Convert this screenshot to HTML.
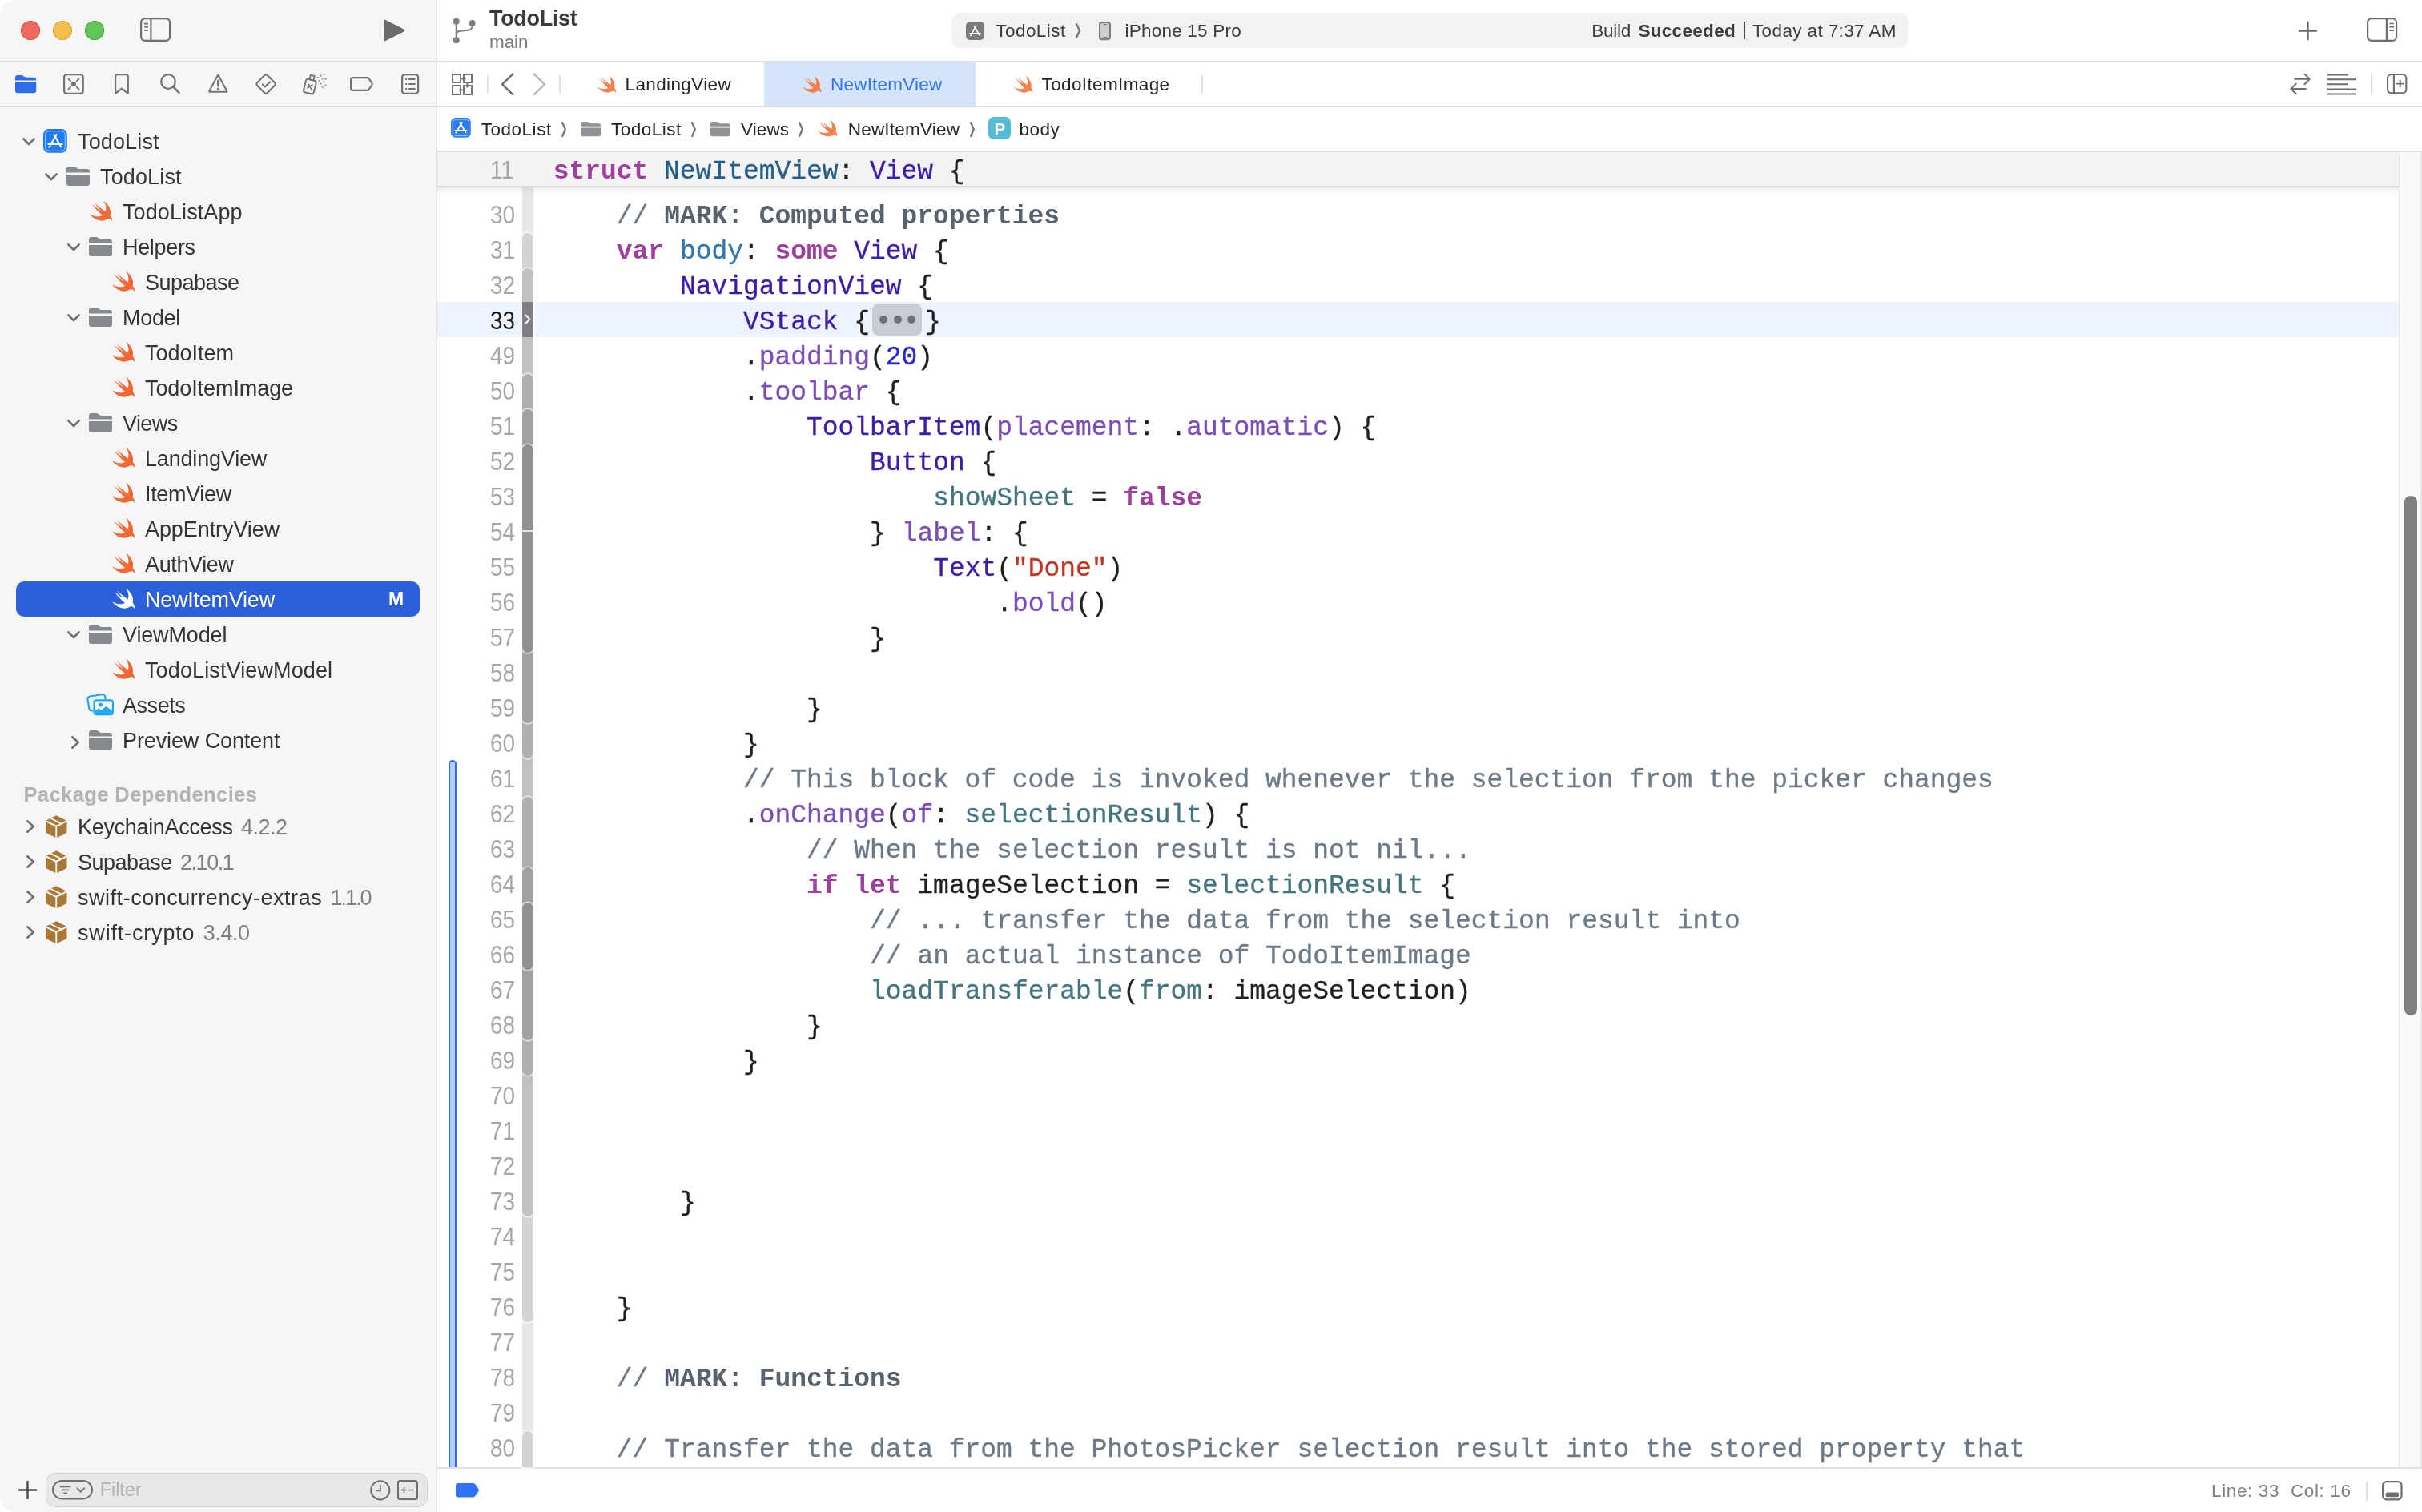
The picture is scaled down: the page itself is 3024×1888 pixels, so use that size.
<!DOCTYPE html>
<html lang="en"><head><meta charset="utf-8"><title>TodoList — NewItemView.swift</title>
<style>html,body{margin:0;padding:0;background:#fff;}body{width:3024px;height:1888px;position:relative;overflow:hidden;font-family:"Liberation Sans",sans-serif;-webkit-font-smoothing:antialiased;}svg{display:block}#win{position:absolute;left:0;top:0;width:3024px;height:1888px;will-change:transform;}</style></head>
<body>
<div id="win">
<div style="position:absolute;left:0px;top:0px;width:3024px;height:1888px;background:#ffffff;"></div>
<div style="position:absolute;left:0px;top:0px;width:544px;height:1888px;background:#f6f6f6;border-radius:20px 0 0 20px;"></div>
<div style="position:absolute;left:544px;top:0px;width:2px;height:1888px;background:linear-gradient(90deg,#ececec,#dadada);"></div>
<div style="position:absolute;left:0px;top:76px;width:544px;height:2px;background:#dadada;"></div>
<div style="position:absolute;left:546px;top:76px;width:2478px;height:2px;background:#dedede;"></div>
<div style="position:absolute;left:0px;top:132px;width:544px;height:2px;background:#dadada;"></div>
<div style="position:absolute;left:546px;top:132px;width:2478px;height:2px;background:#dedede;"></div>
<div style="position:absolute;left:26px;top:26px;width:24px;height:24px;border-radius:50%;background:#ee6a5f;box-shadow:inset 0 0 0 1px #d9574c;"></div>
<div style="position:absolute;left:66px;top:26px;width:24px;height:24px;border-radius:50%;background:#f5be4f;box-shadow:inset 0 0 0 1px #d9a33c;"></div>
<div style="position:absolute;left:106px;top:26px;width:24px;height:24px;border-radius:50%;background:#62c555;box-shadow:inset 0 0 0 1px #4fa941;"></div>
<svg style="position:absolute;left:175px;top:22px;overflow:visible" width="38.2" height="30" viewBox="0 0 38.2 30" ><rect x="1.1" y="1.1" width="36" height="27.8" rx="5" fill="none" stroke="#6e6e6e" stroke-width="2.2"/><path d="M13.4 1.1V28.9" stroke="#6e6e6e" stroke-width="2.2"/><path d="M5 7.6H10M5 11.8H10M5 16H10" stroke="#6e6e6e" stroke-width="1.6"/></svg>
<svg style="position:absolute;left:479px;top:24px;overflow:visible" width="27" height="28" viewBox="0 0 27 28" ><path d="M0 2.4Q0 -.4 2.4 .9L25.4 12.6Q27.6 14 25.4 15.4L2.4 27.1Q0 28.4 0 25.6Z" fill="#6b6b6b"/></svg>
<svg style="position:absolute;left:565px;top:22px;overflow:visible" width="29" height="33" viewBox="0 0 29 33" ><circle cx="4.7" cy="4.7" r="4" fill="#808080"/><circle cx="24.6" cy="7" r="4" fill="#808080"/><circle cx="4.7" cy="28.3" r="4" fill="#808080"/><path d="M4.7 4.7V28.3" stroke="#808080" stroke-width="2" fill="none"/><path d="M24.6 7V10.5Q24.6 15.2 19 15.8L9.5 16.8Q4.7 17.4 4.7 21.5" stroke="#808080" stroke-width="2" fill="none"/></svg>
<div style="position:absolute;left:611.00px;top:5.74px;height:35px;line-height:35px;white-space:pre;font-family:'Liberation Sans',sans-serif;font-size:27px;font-weight:700;color:#3a3a3a;letter-spacing:-0.309px;">TodoList</div>
<div style="position:absolute;left:611.00px;top:38.20px;height:29px;line-height:29px;white-space:pre;font-family:'Liberation Sans',sans-serif;font-size:22.5px;font-weight:400;color:#7a7a7a;letter-spacing:-0.117px;">main</div>
<div style="position:absolute;left:1188px;top:16px;width:1193.5px;height:43.5px;background:#f2f2f2;border-radius:11px;"></div>
<svg style="position:absolute;left:1206px;top:26.5px;overflow:visible" width="23" height="23" viewBox="0 0 30 30" ><rect x="0" y="0" width="30" height="30" rx="7" fill="#7b7b7b"/><rect x="2.6" y="2.6" width="24.8" height="24.8" rx="4.6" fill="none" stroke="rgba(255,255,255,0)" stroke-width="1.1"/><g stroke="#fff" stroke-width="2.1" stroke-linecap="round" fill="none"><path d="M16.6 7.2L9.4 19.6"/><path d="M13.6 7.2L22.4 22.6"/><path d="M6.4 19.2H23.8"/><path d="M8.2 21.8L7.6 22.8"/></g></svg>
<div style="position:absolute;left:1243.30px;top:23.80px;height:29px;line-height:29px;white-space:pre;font-family:'Liberation Sans',sans-serif;font-size:22.5px;font-weight:400;color:#3c3c3c;letter-spacing:0.437px;">TodoList</div>
<svg style="position:absolute;left:1342.7px;top:29.2px;overflow:visible" width="6.4" height="18.6" viewBox="0 0 6.4 18.6" ><path d="M1.2 1.2L5.0 9.3L1.2 17.400000000000002" fill="none" stroke="#787878" stroke-width="2.4" stroke-linecap="round" stroke-linejoin="miter"/></svg>
<svg style="position:absolute;left:1372.4px;top:26.5px;overflow:visible" width="15" height="23.2" viewBox="0 0 15 23.2" ><rect x="1" y="1" width="13" height="21.2" rx="3" fill="#cfcfcf" stroke="#7c7c7c" stroke-width="2"/><path d="M5.4 3.6H9.6M5 19.6H10" stroke="#7c7c7c" stroke-width="1.2"/></svg>
<div style="position:absolute;left:1404.60px;top:23.80px;height:29px;line-height:29px;white-space:pre;font-family:'Liberation Sans',sans-serif;font-size:22.5px;font-weight:400;color:#3c3c3c;letter-spacing:0.207px;">iPhone 15 Pro</div>
<div style="position:absolute;left:1987.20px;top:23.70px;height:29px;line-height:29px;white-space:pre;font-family:'Liberation Sans',sans-serif;font-size:22.5px;font-weight:400;color:#3c3c3c;letter-spacing:-0.266px;">Build</div>
<div style="position:absolute;left:2045.40px;top:23.70px;height:29px;line-height:29px;white-space:pre;font-family:'Liberation Sans',sans-serif;font-size:22.5px;font-weight:700;color:#3c3c3c;letter-spacing:0.321px;">Succeeded</div>
<div style="position:absolute;left:2177px;top:27px;width:2px;height:22px;background:#4a4a4a;"></div>
<div style="position:absolute;left:2188.00px;top:23.70px;height:29px;line-height:29px;white-space:pre;font-family:'Liberation Sans',sans-serif;font-size:22.5px;font-weight:400;color:#3c3c3c;letter-spacing:0.371px;">Today at 7:37 AM</div>
<svg style="position:absolute;left:2870px;top:26.5px;overflow:visible" width="23" height="23" viewBox="0 0 23 23" ><path d="M11.5 1V22M1 11.5H22" stroke="#6b6b6b" stroke-width="2.4" stroke-linecap="round"/></svg>
<svg style="position:absolute;left:2955.2px;top:22px;overflow:visible" width="38.2" height="30" viewBox="0 0 38.2 30" ><rect x="1.1" y="1.1" width="36" height="27.8" rx="5" fill="none" stroke="#6e6e6e" stroke-width="2.2"/><path d="M24.9 1.1V28.9" stroke="#6e6e6e" stroke-width="2.2"/><path d="M28.4 7.5H33.8M28.4 11.8H33.8M28.4 16.1H33.8" stroke="#6e6e6e" stroke-width="1.6"/></svg>
<svg style="position:absolute;left:19px;top:94px;overflow:visible" width="26.2" height="22.2" viewBox="0 0 26.2 22.2" ><path d="M0 3Q0 0 3 0H7.6Q9 0 10.2 .9L11.6 2Q12.6 2.8 14 2.8H23.2Q26.2 2.8 26.2 5.8V6.4H0Z" fill="#2f6beb"/><path d="M0 8.6H26.2V19.2Q26.2 22.2 23.2 22.2H3Q0 22.2 0 19.2Z" fill="#2f6beb"/></svg>
<svg style="position:absolute;left:79.2px;top:91.9px;overflow:visible" width="25.8" height="26" viewBox="0 0 25.8 26" ><rect x="1.1" y="1.1" width="23.6" height="23.8" rx="3.2" fill="none" stroke="#737373" stroke-width="2.2"/><circle cx="12.9" cy="13" r="3.1" fill="#737373"/><g stroke="#737373" stroke-width="1.9" stroke-linecap="round"><path d="M6.4 6.5L9 9.1"/><path d="M19.4 6.5L16.8 9.1"/><path d="M6.4 19.5L9 16.9"/><path d="M19.4 19.5L16.8 16.9"/></g></svg>
<svg style="position:absolute;left:143px;top:91.9px;overflow:visible" width="18" height="26" viewBox="0 0 18 26" ><path d="M1.1 24.6V3.6Q1.1 1.1 3.6 1.1H14.3Q16.8 1.1 16.8 3.6V24.6L8.95 18.6Z" fill="none" stroke="#737373" stroke-width="2.2" stroke-linejoin="round"/></svg>
<svg style="position:absolute;left:198.5px;top:91.2px;overflow:visible" width="26" height="26" viewBox="0 0 26 26" ><circle cx="11" cy="11" r="8.8" fill="none" stroke="#737373" stroke-width="2.3"/><path d="M17.4 17.6L24.6 24.8" stroke="#737373" stroke-width="2.6" stroke-linecap="round"/></svg>
<svg style="position:absolute;left:259.6px;top:91.6px;overflow:visible" width="24.6" height="24" viewBox="0 0 24.6 24" ><path d="M12.3 1.6L23.2 21.4Q23.8 22.8 22.4 22.8H2.2Q.8 22.8 1.4 21.4Z" fill="none" stroke="#737373" stroke-width="2.1" stroke-linejoin="round"/><path d="M12.3 8.6V15.4" stroke="#737373" stroke-width="2.4" stroke-linecap="round"/><circle cx="12.3" cy="19" r="1.4" fill="#737373"/></svg>
<svg style="position:absolute;left:319px;top:91.8px;overflow:visible" width="26.1" height="26.1" viewBox="0 0 26.1 26.1" ><rect x="4.1" y="4.1" width="17.9" height="17.9" rx="2.4" transform="rotate(45 13.05 13.05)" fill="none" stroke="#737373" stroke-width="2.1"/><path d="M8.8 13.6L11.8 16.4L18 10.4" fill="none" stroke="#737373" stroke-width="2.1" stroke-linecap="round" stroke-linejoin="round"/></svg>
<svg style="position:absolute;left:377.5px;top:91.4px;overflow:visible" width="30" height="27.5" viewBox="0 0 30 27.5" ><g transform="rotate(14 9 17)"><rect x="2.4" y="8.6" width="13" height="17" rx="2.6" fill="none" stroke="#737373" stroke-width="2"/><rect x="6.4" y="3" width="5" height="5.6" fill="none" stroke="#737373" stroke-width="1.8"/><path d="M6.4 14.6L11.4 19.6M11.4 14.6L6.4 19.6" stroke="#737373" stroke-width="1.7" stroke-linecap="round"/></g><g fill="#737373" opacity=".75"><rect x="17.6" y="5" width="2" height="2"/><rect x="21.6" y="2.6" width="2" height="2"/><rect x="25.6" y="0.8" width="2" height="2"/><rect x="19.6" y="9" width="2" height="2"/><rect x="23.6" y="6.4" width="2" height="2"/><rect x="27.6" y="6.6" width="2" height="2"/><rect x="21.6" y="12.6" width="2" height="2"/><rect x="25.6" y="10.6" width="2" height="2"/><rect x="23.6" y="16.6" width="2" height="2"/><rect x="27.6" y="14.6" width="2" height="2"/></g></svg>
<svg style="position:absolute;left:437px;top:96px;overflow:visible" width="29.5" height="18" viewBox="0 0 29.5 18" ><path d="M3.6 1.1H21.4Q23 1.1 23.9 2.6L28 9L23.9 15.4Q23 16.9 21.4 16.9H3.6Q1.1 16.9 1.1 14.4V3.6Q1.1 1.1 3.6 1.1Z" fill="none" stroke="#737373" stroke-width="2.2" stroke-linejoin="round"/></svg>
<svg style="position:absolute;left:501px;top:91.9px;overflow:visible" width="22.2" height="26" viewBox="0 0 22.2 26" ><rect x="1.1" y="1.1" width="20" height="23.8" rx="3.2" fill="none" stroke="#737373" stroke-width="2.2"/><g stroke="#737373" stroke-width="2" stroke-linecap="butt"><path d="M5.2 7H7.2M9.2 7H17.6"/><path d="M5.2 13H7.2M9.2 13H17.6"/><path d="M5.2 19H7.2M9.2 19H17.6"/></g></svg>
<svg style="position:absolute;left:564.4px;top:91.7px;overflow:visible" width="26" height="27" viewBox="0 0 26 27" ><g fill="none" stroke="#757575" stroke-width="2"><rect x="1" y="1" width="10" height="10"/><rect x="15" y="1" width="10" height="10"/><rect x="1" y="15" width="10" height="11"/><rect x="15" y="15" width="10" height="11"/><path d="M11 6.6H17.6M9 20.4H15M19.4 11V17.6"/></g></svg>
<div style="position:absolute;left:608px;top:94px;width:2px;height:23px;background:#e3e3e3;"></div>
<svg style="position:absolute;left:625.3px;top:90.8px;overflow:visible" width="17" height="28.6" viewBox="0 0 17 28.6" ><path d="M15.4 1.4L2 14.3L15.4 27.2" fill="none" stroke="#6e6e6e" stroke-width="2.4" stroke-linecap="round" stroke-linejoin="round"/></svg>
<svg style="position:absolute;left:665.2px;top:90.8px;overflow:visible" width="17" height="28.6" viewBox="0 0 17 28.6" ><path d="M1.6 1.4L15 14.3L1.6 27.2" fill="none" stroke="#b9b9b9" stroke-width="2.4" stroke-linecap="round" stroke-linejoin="round"/></svg>
<div style="position:absolute;left:698px;top:94px;width:2px;height:23px;background:#e3e3e3;"></div>
<div style="position:absolute;left:954px;top:78px;width:264px;height:54px;background:#d6e4fb;"></div>
<svg style="position:absolute;left:745.9px;top:94.9px;overflow:visible" width="23.3" height="21" viewBox="2.4 3.4 18.3 16.4" preserveAspectRatio="none"><path d="M13.543 3.41c4.114 2.47 6.545 7.162 5.549 11.131-.024.093-.05.181-.076.272l.002.001c2.062 2.538 1.5 5.258 1.236 4.745-1.072-2.086-3.066-1.568-4.088-1.043a6.803 6.803 0 0 1-.281.158l-.02.012-.002.002c-2.115 1.123-4.957 1.205-7.812-.022a12.568 12.568 0 0 1-5.64-4.838c.649.48 1.35.902 2.097 1.252 3.019 1.414 6.051 1.311 8.197-.002C9.651 12.73 7.101 9.67 5.146 7.191a10.628 10.628 0 0 1-1.005-1.384c2.34 2.142 6.038 4.83 7.365 5.576C8.69 8.408 6.208 4.743 6.324 4.86c4.436 4.47 8.528 6.996 8.528 6.996.154.085.27.154.36.213.085-.215.16-.437.224-.668.708-2.588-.09-5.548-1.893-7.992z" fill="#f0814f"/></svg>
<div style="position:absolute;left:780.60px;top:91.40px;height:29px;line-height:29px;white-space:pre;font-family:'Liberation Sans',sans-serif;font-size:22.5px;font-weight:400;color:#262626;letter-spacing:0.369px;">LandingView</div>
<svg style="position:absolute;left:1001.5px;top:94.9px;overflow:visible" width="23.7" height="21" viewBox="2.4 3.4 18.3 16.4" preserveAspectRatio="none"><path d="M13.543 3.41c4.114 2.47 6.545 7.162 5.549 11.131-.024.093-.05.181-.076.272l.002.001c2.062 2.538 1.5 5.258 1.236 4.745-1.072-2.086-3.066-1.568-4.088-1.043a6.803 6.803 0 0 1-.281.158l-.02.012-.002.002c-2.115 1.123-4.957 1.205-7.812-.022a12.568 12.568 0 0 1-5.64-4.838c.649.48 1.35.902 2.097 1.252 3.019 1.414 6.051 1.311 8.197-.002C9.651 12.73 7.101 9.67 5.146 7.191a10.628 10.628 0 0 1-1.005-1.384c2.34 2.142 6.038 4.83 7.365 5.576C8.69 8.408 6.208 4.743 6.324 4.86c4.436 4.47 8.528 6.996 8.528 6.996.154.085.27.154.36.213.085-.215.16-.437.224-.668.708-2.588-.09-5.548-1.893-7.992z" fill="#f0814f"/></svg>
<div style="position:absolute;left:1037.00px;top:91.40px;height:29px;line-height:29px;white-space:pre;font-family:'Liberation Sans',sans-serif;font-size:22.5px;font-weight:400;color:#2f76f5;letter-spacing:0.215px;">NewItemView</div>
<svg style="position:absolute;left:1265.5px;top:94.9px;overflow:visible" width="23.5" height="21" viewBox="2.4 3.4 18.3 16.4" preserveAspectRatio="none"><path d="M13.543 3.41c4.114 2.47 6.545 7.162 5.549 11.131-.024.093-.05.181-.076.272l.002.001c2.062 2.538 1.5 5.258 1.236 4.745-1.072-2.086-3.066-1.568-4.088-1.043a6.803 6.803 0 0 1-.281.158l-.02.012-.002.002c-2.115 1.123-4.957 1.205-7.812-.022a12.568 12.568 0 0 1-5.64-4.838c.649.48 1.35.902 2.097 1.252 3.019 1.414 6.051 1.311 8.197-.002C9.651 12.73 7.101 9.67 5.146 7.191a10.628 10.628 0 0 1-1.005-1.384c2.34 2.142 6.038 4.83 7.365 5.576C8.69 8.408 6.208 4.743 6.324 4.86c4.436 4.47 8.528 6.996 8.528 6.996.154.085.27.154.36.213.085-.215.16-.437.224-.668.708-2.588-.09-5.548-1.893-7.992z" fill="#f0814f"/></svg>
<div style="position:absolute;left:1300.60px;top:91.40px;height:29px;line-height:29px;white-space:pre;font-family:'Liberation Sans',sans-serif;font-size:22.5px;font-weight:400;color:#262626;letter-spacing:0.363px;">TodoItemImage</div>
<div style="position:absolute;left:1500px;top:94px;width:2px;height:23px;background:#e3e3e3;"></div>
<svg style="position:absolute;left:2859px;top:91px;overflow:visible" width="27" height="28" viewBox="0 0 27 28" ><g fill="none" stroke="#6e6e6e" stroke-width="2" stroke-linecap="round" stroke-linejoin="round"><path d="M6.4 7.8H24.6M18.4 1.6L24.8 7.8L18.4 14.2"/><path d="M19.8 19.9H1.6M7.8 13.6L1.4 19.9L7.8 26.2"/></g></svg>
<svg style="position:absolute;left:2906px;top:91.5px;overflow:visible" width="36" height="27" viewBox="0 0 36 27" ><path d="M0 1.4H26M0 7.3H36M0 13.3H26M0 19.4H36M0 25.5H36" stroke="#6e6e6e" stroke-width="2"/></svg>
<div style="position:absolute;left:2960px;top:93px;width:2px;height:24px;background:#e3e3e3;"></div>
<svg style="position:absolute;left:2980.2px;top:92.2px;overflow:visible" width="25.4" height="25.4" viewBox="0 0 25.4 25.4" ><g fill="none" stroke="#6e6e6e" stroke-width="2.1"><rect x="1.05" y="1.05" width="23.3" height="23.3" rx="4.8"/><path d="M8.9 1V24.4"/><path d="M12 12.6H21.4M16.7 7.9V17.3" stroke-width="1.9"/></g></svg>
<div style="position:absolute;left:546px;top:188px;width:2478px;height:2px;background:#dedede;"></div>
<svg style="position:absolute;left:563.2px;top:147.3px;overflow:visible" width="24.8" height="24.8" viewBox="0 0 30 30" ><rect x="0" y="0" width="30" height="30" rx="7" fill="#2a7df6"/><rect x="2.6" y="2.6" width="24.8" height="24.8" rx="4.6" fill="none" stroke="rgba(255,255,255,.6)" stroke-width="1.1"/><g stroke="#fff" stroke-width="2.1" stroke-linecap="round" fill="none"><path d="M16.6 7.2L9.4 19.6"/><path d="M13.6 7.2L22.4 22.6"/><path d="M6.4 19.2H23.8"/><path d="M8.2 21.8L7.6 22.8"/></g></svg>
<div style="position:absolute;left:600.70px;top:146.60px;height:29px;line-height:29px;white-space:pre;font-family:'Liberation Sans',sans-serif;font-size:22.5px;font-weight:400;color:#262626;letter-spacing:0.524px;">TodoList</div>
<svg style="position:absolute;left:700.7px;top:151.6px;overflow:visible" width="6.2" height="19.2" viewBox="0 0 6.2 19.2" ><path d="M1.2 1.2L4.800000000000001 9.6L1.2 18.0" fill="none" stroke="#787878" stroke-width="2.4" stroke-linecap="round" stroke-linejoin="miter"/></svg>
<svg style="position:absolute;left:725.4px;top:151.7px;overflow:visible" width="25" height="18.2" viewBox="0 0 29 24" preserveAspectRatio="none"><path d="M0 3.2Q0 0 3.2 0H9.2Q10.6 0 11.8 1L13.2 2.2Q14.2 3 15.6 3H25.8Q29 3 29 6.2V7.6H0Z" fill="#8e9297"/><path d="M0 10H29V20.8Q29 24 25.8 24H3.2Q0 24 0 20.8Z" fill="#8e9297"/></svg>
<div style="position:absolute;left:763.00px;top:146.60px;height:29px;line-height:29px;white-space:pre;font-family:'Liberation Sans',sans-serif;font-size:22.5px;font-weight:400;color:#262626;letter-spacing:0.499px;">TodoList</div>
<svg style="position:absolute;left:862.7px;top:151.6px;overflow:visible" width="6.2" height="19.2" viewBox="0 0 6.2 19.2" ><path d="M1.2 1.2L4.800000000000001 9.6L1.2 18.0" fill="none" stroke="#787878" stroke-width="2.4" stroke-linecap="round" stroke-linejoin="miter"/></svg>
<svg style="position:absolute;left:887.3px;top:151.7px;overflow:visible" width="25" height="18.2" viewBox="0 0 29 24" preserveAspectRatio="none"><path d="M0 3.2Q0 0 3.2 0H9.2Q10.6 0 11.8 1L13.2 2.2Q14.2 3 15.6 3H25.8Q29 3 29 6.2V7.6H0Z" fill="#8e9297"/><path d="M0 10H29V20.8Q29 24 25.8 24H3.2Q0 24 0 20.8Z" fill="#8e9297"/></svg>
<div style="position:absolute;left:925.10px;top:146.60px;height:29px;line-height:29px;white-space:pre;font-family:'Liberation Sans',sans-serif;font-size:22.5px;font-weight:400;color:#262626;letter-spacing:0.058px;">Views</div>
<svg style="position:absolute;left:996.7px;top:151.6px;overflow:visible" width="6.2" height="19.2" viewBox="0 0 6.2 19.2" ><path d="M1.2 1.2L4.800000000000001 9.6L1.2 18.0" fill="none" stroke="#787878" stroke-width="2.4" stroke-linecap="round" stroke-linejoin="miter"/></svg>
<svg style="position:absolute;left:1021.1px;top:150.3px;overflow:visible" width="24.8" height="20.6" viewBox="2.4 3.4 18.3 16.4" preserveAspectRatio="none"><path d="M13.543 3.41c4.114 2.47 6.545 7.162 5.549 11.131-.024.093-.05.181-.076.272l.002.001c2.062 2.538 1.5 5.258 1.236 4.745-1.072-2.086-3.066-1.568-4.088-1.043a6.803 6.803 0 0 1-.281.158l-.02.012-.002.002c-2.115 1.123-4.957 1.205-7.812-.022a12.568 12.568 0 0 1-5.64-4.838c.649.48 1.35.902 2.097 1.252 3.019 1.414 6.051 1.311 8.197-.002C9.651 12.73 7.101 9.67 5.146 7.191a10.628 10.628 0 0 1-1.005-1.384c2.34 2.142 6.038 4.83 7.365 5.576C8.69 8.408 6.208 4.743 6.324 4.86c4.436 4.47 8.528 6.996 8.528 6.996.154.085.27.154.36.213.085-.215.16-.437.224-.668.708-2.588-.09-5.548-1.893-7.992z" fill="#f0814f"/></svg>
<div style="position:absolute;left:1058.70px;top:146.60px;height:29px;line-height:29px;white-space:pre;font-family:'Liberation Sans',sans-serif;font-size:22.5px;font-weight:400;color:#262626;letter-spacing:0.215px;">NewItemView</div>
<svg style="position:absolute;left:1211px;top:151.6px;overflow:visible" width="6.2" height="19.2" viewBox="0 0 6.2 19.2" ><path d="M1.2 1.2L4.800000000000001 9.6L1.2 18.0" fill="none" stroke="#787878" stroke-width="2.4" stroke-linecap="round" stroke-linejoin="miter"/></svg>
<div style="position:absolute;left:1234.1px;top:145.8px;width:28px;height:28px;border-radius:6.5px;background:#56bcd6;"></div>
<div style="position:absolute;left:1241.50px;top:146.90px;height:27px;line-height:27px;white-space:pre;font-family:'Liberation Sans',sans-serif;font-size:20.5px;font-weight:700;color:#ffffff;letter-spacing:0.000px;">P</div>
<div style="position:absolute;left:1272.50px;top:146.60px;height:29px;line-height:29px;white-space:pre;font-family:'Liberation Sans',sans-serif;font-size:22.5px;font-weight:400;color:#262626;letter-spacing:0.502px;">body</div>
<div style="position:absolute;left:546px;top:1832px;width:2478px;height:2px;background:#e2e2e2;"></div>
<div style="position:absolute;left:546px;top:1834px;width:2478px;height:54px;background:#ffffff;"></div>
<svg style="position:absolute;left:569px;top:1852.3px;overflow:visible" width="29" height="17.4" viewBox="0 0 29 17.4" ><path d="M3 0H21.6Q23.4 0 24.6 1.6L28.4 7.2Q29.2 8.7 28.4 10.2L24.6 15.8Q23.4 17.4 21.6 17.4H3Q0 17.4 0 14.4V3Q0 0 3 0Z" fill="#2f72f6"/></svg>
<div style="position:absolute;left:2761.00px;top:1847.10px;height:29px;line-height:29px;white-space:pre;font-family:'Liberation Sans',sans-serif;font-size:22.5px;font-weight:400;color:#7f7f7f;letter-spacing:0.632px;">Line: 33  Col: 16</div>
<div style="position:absolute;left:2954px;top:1850px;width:2px;height:24px;background:#e3e3e3;"></div>
<svg style="position:absolute;left:2973.6px;top:1849.4px;overflow:visible" width="25.6" height="24.4" viewBox="0 0 25.6 24.4" ><rect x="1.1" y="1.1" width="23.4" height="22.2" rx="4.6" fill="none" stroke="#6e6e6e" stroke-width="2.2"/><rect x="4.6" y="14.6" width="16.4" height="5.6" rx="1.6" fill="#6e6e6e"/></svg>
<svg style="position:absolute;left:22.5px;top:1849px;overflow:visible" width="23" height="23" viewBox="0 0 23 23" ><path d="M11.5 1V22M1 11.5H22" stroke="#4a4a4a" stroke-width="2.4" stroke-linecap="round"/></svg>
<div style="position:absolute;left:56.5px;top:1838.5px;width:475px;height:41.5px;border-radius:12px;background:#e8e8e8;border:1px solid #d2d2d2;"></div>
<svg style="position:absolute;left:65px;top:1848px;overflow:visible" width="51" height="24.4" viewBox="0 0 51 24.4" ><rect x="1" y="1" width="49" height="22.4" rx="11.2" fill="none" stroke="#707070" stroke-width="2"/><path d="M10.6 8.4H22.6M12.8 12.4H20.4M15 16.4H18.2" stroke="#707070" stroke-width="1.8" stroke-linecap="round"/><path d="M31.4 10.4L35.8 14.6L40.2 10.4" fill="none" stroke="#707070" stroke-width="2" stroke-linecap="round" stroke-linejoin="round"/></svg>
<div style="position:absolute;left:124.70px;top:1844.96px;height:31px;line-height:31px;white-space:pre;font-family:'Liberation Sans',sans-serif;font-size:23.5px;font-weight:400;color:#b4b4b4;letter-spacing:-0.037px;">Filter</div>
<svg style="position:absolute;left:462px;top:1847.5px;overflow:visible" width="25.6" height="25.6" viewBox="0 0 25.6 25.6" ><circle cx="12.8" cy="12.8" r="11.6" fill="none" stroke="#6e6e6e" stroke-width="2"/><path d="M12.8 6V13.4H7.6" fill="none" stroke="#6e6e6e" stroke-width="1.8"/></svg>
<svg style="position:absolute;left:496px;top:1848px;overflow:visible" width="26" height="25" viewBox="0 0 26 25" ><rect x="1" y="1" width="24" height="23" rx="2.6" fill="none" stroke="#6e6e6e" stroke-width="2"/><path d="M5 12.5H12M8.5 9V16M14.6 12.5H21" stroke="#6e6e6e" stroke-width="1.7"/></svg>
<svg style="position:absolute;left:28px;top:172px;overflow:visible" width="16" height="9.5" viewBox="0 0 16 9.5" ><path d="M1.3 1.3L8.0 8.0L14.7 1.3" fill="none" stroke="#6f6f6f" stroke-width="2.6" stroke-linecap="round" stroke-linejoin="round"/></svg>
<svg style="position:absolute;left:54.2px;top:161px;overflow:visible" width="29.8" height="29.8" viewBox="0 0 30 30" ><rect x="0" y="0" width="30" height="30" rx="7" fill="#1d7bf5"/><rect x="2.6" y="2.6" width="24.8" height="24.8" rx="4.6" fill="none" stroke="rgba(255,255,255,.55)" stroke-width="1.1"/><g stroke="#fff" stroke-width="2.1" stroke-linecap="round" fill="none"><path d="M16.6 7.2L9.4 19.6"/><path d="M13.6 7.2L22.4 22.6"/><path d="M6.4 19.2H23.8"/><path d="M8.2 21.8L7.6 22.8"/></g></svg>
<div style="position:absolute;left:97.00px;top:159.74px;height:35px;line-height:35px;white-space:pre;font-family:'Liberation Sans',sans-serif;font-size:27px;font-weight:400;color:#353535;letter-spacing:0.142px;">TodoList</div>
<svg style="position:absolute;left:83px;top:208px;overflow:visible" width="29" height="24" viewBox="0 0 29 24" preserveAspectRatio="none"><path d="M0 3.2Q0 0 3.2 0H9.2Q10.6 0 11.8 1L13.2 2.2Q14.2 3 15.6 3H25.8Q29 3 29 6.2V7.6H0Z" fill="#868a8e"/><path d="M0 10H29V20.8Q29 24 25.8 24H3.2Q0 24 0 20.8Z" fill="#868a8e"/></svg>
<svg style="position:absolute;left:56px;top:216px;overflow:visible" width="16" height="9.5" viewBox="0 0 16 9.5" ><path d="M1.3 1.3L8.0 8.0L14.7 1.3" fill="none" stroke="#6f6f6f" stroke-width="2.6" stroke-linecap="round" stroke-linejoin="round"/></svg>
<div style="position:absolute;left:125.00px;top:203.74px;height:35px;line-height:35px;white-space:pre;font-family:'Liberation Sans',sans-serif;font-size:27px;font-weight:400;color:#353535;letter-spacing:0.142px;">TodoList</div>
<svg style="position:absolute;left:111.5px;top:251px;overflow:visible" width="28.2" height="25" viewBox="2.4 3.4 18.3 16.4" preserveAspectRatio="none"><path d="M13.543 3.41c4.114 2.47 6.545 7.162 5.549 11.131-.024.093-.05.181-.076.272l.002.001c2.062 2.538 1.5 5.258 1.236 4.745-1.072-2.086-3.066-1.568-4.088-1.043a6.803 6.803 0 0 1-.281.158l-.02.012-.002.002c-2.115 1.123-4.957 1.205-7.812-.022a12.568 12.568 0 0 1-5.64-4.838c.649.48 1.35.902 2.097 1.252 3.019 1.414 6.051 1.311 8.197-.002C9.651 12.73 7.101 9.67 5.146 7.191a10.628 10.628 0 0 1-1.005-1.384c2.34 2.142 6.038 4.83 7.365 5.576C8.69 8.408 6.208 4.743 6.324 4.86c4.436 4.47 8.528 6.996 8.528 6.996.154.085.27.154.36.213.085-.215.16-.437.224-.668.708-2.588-.09-5.548-1.893-7.992z" fill="#f06a35"/></svg>
<div style="position:absolute;left:153.00px;top:247.74px;height:35px;line-height:35px;white-space:pre;font-family:'Liberation Sans',sans-serif;font-size:27px;font-weight:400;color:#353535;letter-spacing:0.099px;">TodoListApp</div>
<svg style="position:absolute;left:111px;top:296px;overflow:visible" width="29" height="24" viewBox="0 0 29 24" preserveAspectRatio="none"><path d="M0 3.2Q0 0 3.2 0H9.2Q10.6 0 11.8 1L13.2 2.2Q14.2 3 15.6 3H25.8Q29 3 29 6.2V7.6H0Z" fill="#868a8e"/><path d="M0 10H29V20.8Q29 24 25.8 24H3.2Q0 24 0 20.8Z" fill="#868a8e"/></svg>
<svg style="position:absolute;left:84px;top:304px;overflow:visible" width="16" height="9.5" viewBox="0 0 16 9.5" ><path d="M1.3 1.3L8.0 8.0L14.7 1.3" fill="none" stroke="#6f6f6f" stroke-width="2.6" stroke-linecap="round" stroke-linejoin="round"/></svg>
<div style="position:absolute;left:153.00px;top:291.74px;height:35px;line-height:35px;white-space:pre;font-family:'Liberation Sans',sans-serif;font-size:27px;font-weight:400;color:#353535;letter-spacing:-0.320px;">Helpers</div>
<svg style="position:absolute;left:139.5px;top:339px;overflow:visible" width="28.2" height="25" viewBox="2.4 3.4 18.3 16.4" preserveAspectRatio="none"><path d="M13.543 3.41c4.114 2.47 6.545 7.162 5.549 11.131-.024.093-.05.181-.076.272l.002.001c2.062 2.538 1.5 5.258 1.236 4.745-1.072-2.086-3.066-1.568-4.088-1.043a6.803 6.803 0 0 1-.281.158l-.02.012-.002.002c-2.115 1.123-4.957 1.205-7.812-.022a12.568 12.568 0 0 1-5.64-4.838c.649.48 1.35.902 2.097 1.252 3.019 1.414 6.051 1.311 8.197-.002C9.651 12.73 7.101 9.67 5.146 7.191a10.628 10.628 0 0 1-1.005-1.384c2.34 2.142 6.038 4.83 7.365 5.576C8.69 8.408 6.208 4.743 6.324 4.86c4.436 4.47 8.528 6.996 8.528 6.996.154.085.27.154.36.213.085-.215.16-.437.224-.668.708-2.588-.09-5.548-1.893-7.992z" fill="#f06a35"/></svg>
<div style="position:absolute;left:181.00px;top:335.74px;height:35px;line-height:35px;white-space:pre;font-family:'Liberation Sans',sans-serif;font-size:27px;font-weight:400;color:#353535;letter-spacing:-0.513px;">Supabase</div>
<svg style="position:absolute;left:111px;top:384px;overflow:visible" width="29" height="24" viewBox="0 0 29 24" preserveAspectRatio="none"><path d="M0 3.2Q0 0 3.2 0H9.2Q10.6 0 11.8 1L13.2 2.2Q14.2 3 15.6 3H25.8Q29 3 29 6.2V7.6H0Z" fill="#868a8e"/><path d="M0 10H29V20.8Q29 24 25.8 24H3.2Q0 24 0 20.8Z" fill="#868a8e"/></svg>
<svg style="position:absolute;left:84px;top:392px;overflow:visible" width="16" height="9.5" viewBox="0 0 16 9.5" ><path d="M1.3 1.3L8.0 8.0L14.7 1.3" fill="none" stroke="#6f6f6f" stroke-width="2.6" stroke-linecap="round" stroke-linejoin="round"/></svg>
<div style="position:absolute;left:153.00px;top:379.74px;height:35px;line-height:35px;white-space:pre;font-family:'Liberation Sans',sans-serif;font-size:27px;font-weight:400;color:#353535;letter-spacing:-0.308px;">Model</div>
<svg style="position:absolute;left:139.5px;top:427px;overflow:visible" width="28.2" height="25" viewBox="2.4 3.4 18.3 16.4" preserveAspectRatio="none"><path d="M13.543 3.41c4.114 2.47 6.545 7.162 5.549 11.131-.024.093-.05.181-.076.272l.002.001c2.062 2.538 1.5 5.258 1.236 4.745-1.072-2.086-3.066-1.568-4.088-1.043a6.803 6.803 0 0 1-.281.158l-.02.012-.002.002c-2.115 1.123-4.957 1.205-7.812-.022a12.568 12.568 0 0 1-5.64-4.838c.649.48 1.35.902 2.097 1.252 3.019 1.414 6.051 1.311 8.197-.002C9.651 12.73 7.101 9.67 5.146 7.191a10.628 10.628 0 0 1-1.005-1.384c2.34 2.142 6.038 4.83 7.365 5.576C8.69 8.408 6.208 4.743 6.324 4.86c4.436 4.47 8.528 6.996 8.528 6.996.154.085.27.154.36.213.085-.215.16-.437.224-.668.708-2.588-.09-5.548-1.893-7.992z" fill="#f06a35"/></svg>
<div style="position:absolute;left:181.00px;top:423.74px;height:35px;line-height:35px;white-space:pre;font-family:'Liberation Sans',sans-serif;font-size:27px;font-weight:400;color:#353535;letter-spacing:0.005px;">TodoItem</div>
<svg style="position:absolute;left:139.5px;top:471px;overflow:visible" width="28.2" height="25" viewBox="2.4 3.4 18.3 16.4" preserveAspectRatio="none"><path d="M13.543 3.41c4.114 2.47 6.545 7.162 5.549 11.131-.024.093-.05.181-.076.272l.002.001c2.062 2.538 1.5 5.258 1.236 4.745-1.072-2.086-3.066-1.568-4.088-1.043a6.803 6.803 0 0 1-.281.158l-.02.012-.002.002c-2.115 1.123-4.957 1.205-7.812-.022a12.568 12.568 0 0 1-5.64-4.838c.649.48 1.35.902 2.097 1.252 3.019 1.414 6.051 1.311 8.197-.002C9.651 12.73 7.101 9.67 5.146 7.191a10.628 10.628 0 0 1-1.005-1.384c2.34 2.142 6.038 4.83 7.365 5.576C8.69 8.408 6.208 4.743 6.324 4.86c4.436 4.47 8.528 6.996 8.528 6.996.154.085.27.154.36.213.085-.215.16-.437.224-.668.708-2.588-.09-5.548-1.893-7.992z" fill="#f06a35"/></svg>
<div style="position:absolute;left:181.00px;top:467.74px;height:35px;line-height:35px;white-space:pre;font-family:'Liberation Sans',sans-serif;font-size:27px;font-weight:400;color:#353535;letter-spacing:-0.085px;">TodoItemImage</div>
<svg style="position:absolute;left:111px;top:516px;overflow:visible" width="29" height="24" viewBox="0 0 29 24" preserveAspectRatio="none"><path d="M0 3.2Q0 0 3.2 0H9.2Q10.6 0 11.8 1L13.2 2.2Q14.2 3 15.6 3H25.8Q29 3 29 6.2V7.6H0Z" fill="#868a8e"/><path d="M0 10H29V20.8Q29 24 25.8 24H3.2Q0 24 0 20.8Z" fill="#868a8e"/></svg>
<svg style="position:absolute;left:84px;top:524px;overflow:visible" width="16" height="9.5" viewBox="0 0 16 9.5" ><path d="M1.3 1.3L8.0 8.0L14.7 1.3" fill="none" stroke="#6f6f6f" stroke-width="2.6" stroke-linecap="round" stroke-linejoin="round"/></svg>
<div style="position:absolute;left:153.00px;top:511.74px;height:35px;line-height:35px;white-space:pre;font-family:'Liberation Sans',sans-serif;font-size:27px;font-weight:400;color:#353535;letter-spacing:-0.587px;">Views</div>
<svg style="position:absolute;left:139.5px;top:559px;overflow:visible" width="28.2" height="25" viewBox="2.4 3.4 18.3 16.4" preserveAspectRatio="none"><path d="M13.543 3.41c4.114 2.47 6.545 7.162 5.549 11.131-.024.093-.05.181-.076.272l.002.001c2.062 2.538 1.5 5.258 1.236 4.745-1.072-2.086-3.066-1.568-4.088-1.043a6.803 6.803 0 0 1-.281.158l-.02.012-.002.002c-2.115 1.123-4.957 1.205-7.812-.022a12.568 12.568 0 0 1-5.64-4.838c.649.48 1.35.902 2.097 1.252 3.019 1.414 6.051 1.311 8.197-.002C9.651 12.73 7.101 9.67 5.146 7.191a10.628 10.628 0 0 1-1.005-1.384c2.34 2.142 6.038 4.83 7.365 5.576C8.69 8.408 6.208 4.743 6.324 4.86c4.436 4.47 8.528 6.996 8.528 6.996.154.085.27.154.36.213.085-.215.16-.437.224-.668.708-2.588-.09-5.548-1.893-7.992z" fill="#f06a35"/></svg>
<div style="position:absolute;left:181.00px;top:555.74px;height:35px;line-height:35px;white-space:pre;font-family:'Liberation Sans',sans-serif;font-size:27px;font-weight:400;color:#353535;letter-spacing:-0.176px;">LandingView</div>
<svg style="position:absolute;left:139.5px;top:603px;overflow:visible" width="28.2" height="25" viewBox="2.4 3.4 18.3 16.4" preserveAspectRatio="none"><path d="M13.543 3.41c4.114 2.47 6.545 7.162 5.549 11.131-.024.093-.05.181-.076.272l.002.001c2.062 2.538 1.5 5.258 1.236 4.745-1.072-2.086-3.066-1.568-4.088-1.043a6.803 6.803 0 0 1-.281.158l-.02.012-.002.002c-2.115 1.123-4.957 1.205-7.812-.022a12.568 12.568 0 0 1-5.64-4.838c.649.48 1.35.902 2.097 1.252 3.019 1.414 6.051 1.311 8.197-.002C9.651 12.73 7.101 9.67 5.146 7.191a10.628 10.628 0 0 1-1.005-1.384c2.34 2.142 6.038 4.83 7.365 5.576C8.69 8.408 6.208 4.743 6.324 4.86c4.436 4.47 8.528 6.996 8.528 6.996.154.085.27.154.36.213.085-.215.16-.437.224-.668.708-2.588-.09-5.548-1.893-7.992z" fill="#f06a35"/></svg>
<div style="position:absolute;left:181.00px;top:599.74px;height:35px;line-height:35px;white-space:pre;font-family:'Liberation Sans',sans-serif;font-size:27px;font-weight:400;color:#353535;letter-spacing:-0.343px;">ItemView</div>
<svg style="position:absolute;left:139.5px;top:647px;overflow:visible" width="28.2" height="25" viewBox="2.4 3.4 18.3 16.4" preserveAspectRatio="none"><path d="M13.543 3.41c4.114 2.47 6.545 7.162 5.549 11.131-.024.093-.05.181-.076.272l.002.001c2.062 2.538 1.5 5.258 1.236 4.745-1.072-2.086-3.066-1.568-4.088-1.043a6.803 6.803 0 0 1-.281.158l-.02.012-.002.002c-2.115 1.123-4.957 1.205-7.812-.022a12.568 12.568 0 0 1-5.64-4.838c.649.48 1.35.902 2.097 1.252 3.019 1.414 6.051 1.311 8.197-.002C9.651 12.73 7.101 9.67 5.146 7.191a10.628 10.628 0 0 1-1.005-1.384c2.34 2.142 6.038 4.83 7.365 5.576C8.69 8.408 6.208 4.743 6.324 4.86c4.436 4.47 8.528 6.996 8.528 6.996.154.085.27.154.36.213.085-.215.16-.437.224-.668.708-2.588-.09-5.548-1.893-7.992z" fill="#f06a35"/></svg>
<div style="position:absolute;left:181.00px;top:643.74px;height:35px;line-height:35px;white-space:pre;font-family:'Liberation Sans',sans-serif;font-size:27px;font-weight:400;color:#353535;letter-spacing:-0.083px;">AppEntryView</div>
<svg style="position:absolute;left:139.5px;top:691px;overflow:visible" width="28.2" height="25" viewBox="2.4 3.4 18.3 16.4" preserveAspectRatio="none"><path d="M13.543 3.41c4.114 2.47 6.545 7.162 5.549 11.131-.024.093-.05.181-.076.272l.002.001c2.062 2.538 1.5 5.258 1.236 4.745-1.072-2.086-3.066-1.568-4.088-1.043a6.803 6.803 0 0 1-.281.158l-.02.012-.002.002c-2.115 1.123-4.957 1.205-7.812-.022a12.568 12.568 0 0 1-5.64-4.838c.649.48 1.35.902 2.097 1.252 3.019 1.414 6.051 1.311 8.197-.002C9.651 12.73 7.101 9.67 5.146 7.191a10.628 10.628 0 0 1-1.005-1.384c2.34 2.142 6.038 4.83 7.365 5.576C8.69 8.408 6.208 4.743 6.324 4.86c4.436 4.47 8.528 6.996 8.528 6.996.154.085.27.154.36.213.085-.215.16-.437.224-.668.708-2.588-.09-5.548-1.893-7.992z" fill="#f06a35"/></svg>
<div style="position:absolute;left:181.00px;top:687.74px;height:35px;line-height:35px;white-space:pre;font-family:'Liberation Sans',sans-serif;font-size:27px;font-weight:400;color:#353535;letter-spacing:-0.372px;">AuthView</div>
<div style="position:absolute;left:20px;top:726px;width:504px;height:44px;background:#2c5fd8;border-radius:10px;"></div>
<div style="position:absolute;left:485.00px;top:733.03px;height:30px;line-height:30px;white-space:pre;font-family:'Liberation Sans',sans-serif;font-size:23px;font-weight:700;color:#ffffff;letter-spacing:0.000px;">M</div>
<svg style="position:absolute;left:139.5px;top:735px;overflow:visible" width="28.2" height="25" viewBox="2.4 3.4 18.3 16.4" preserveAspectRatio="none"><path d="M13.543 3.41c4.114 2.47 6.545 7.162 5.549 11.131-.024.093-.05.181-.076.272l.002.001c2.062 2.538 1.5 5.258 1.236 4.745-1.072-2.086-3.066-1.568-4.088-1.043a6.803 6.803 0 0 1-.281.158l-.02.012-.002.002c-2.115 1.123-4.957 1.205-7.812-.022a12.568 12.568 0 0 1-5.64-4.838c.649.48 1.35.902 2.097 1.252 3.019 1.414 6.051 1.311 8.197-.002C9.651 12.73 7.101 9.67 5.146 7.191a10.628 10.628 0 0 1-1.005-1.384c2.34 2.142 6.038 4.83 7.365 5.576C8.69 8.408 6.208 4.743 6.324 4.86c4.436 4.47 8.528 6.996 8.528 6.996.154.085.27.154.36.213.085-.215.16-.437.224-.668.708-2.588-.09-5.548-1.893-7.992z" fill="#ffffff"/></svg>
<div style="position:absolute;left:181.00px;top:731.74px;height:35px;line-height:35px;white-space:pre;font-family:'Liberation Sans',sans-serif;font-size:27px;font-weight:400;color:#ffffff;letter-spacing:-0.242px;">NewItemView</div>
<svg style="position:absolute;left:111px;top:780px;overflow:visible" width="29" height="24" viewBox="0 0 29 24" preserveAspectRatio="none"><path d="M0 3.2Q0 0 3.2 0H9.2Q10.6 0 11.8 1L13.2 2.2Q14.2 3 15.6 3H25.8Q29 3 29 6.2V7.6H0Z" fill="#868a8e"/><path d="M0 10H29V20.8Q29 24 25.8 24H3.2Q0 24 0 20.8Z" fill="#868a8e"/></svg>
<svg style="position:absolute;left:84px;top:788px;overflow:visible" width="16" height="9.5" viewBox="0 0 16 9.5" ><path d="M1.3 1.3L8.0 8.0L14.7 1.3" fill="none" stroke="#6f6f6f" stroke-width="2.6" stroke-linecap="round" stroke-linejoin="round"/></svg>
<div style="position:absolute;left:153.00px;top:775.74px;height:35px;line-height:35px;white-space:pre;font-family:'Liberation Sans',sans-serif;font-size:27px;font-weight:400;color:#353535;letter-spacing:-0.142px;">ViewModel</div>
<svg style="position:absolute;left:139.5px;top:823px;overflow:visible" width="28.2" height="25" viewBox="2.4 3.4 18.3 16.4" preserveAspectRatio="none"><path d="M13.543 3.41c4.114 2.47 6.545 7.162 5.549 11.131-.024.093-.05.181-.076.272l.002.001c2.062 2.538 1.5 5.258 1.236 4.745-1.072-2.086-3.066-1.568-4.088-1.043a6.803 6.803 0 0 1-.281.158l-.02.012-.002.002c-2.115 1.123-4.957 1.205-7.812-.022a12.568 12.568 0 0 1-5.64-4.838c.649.48 1.35.902 2.097 1.252 3.019 1.414 6.051 1.311 8.197-.002C9.651 12.73 7.101 9.67 5.146 7.191a10.628 10.628 0 0 1-1.005-1.384c2.34 2.142 6.038 4.83 7.365 5.576C8.69 8.408 6.208 4.743 6.324 4.86c4.436 4.47 8.528 6.996 8.528 6.996.154.085.27.154.36.213.085-.215.16-.437.224-.668.708-2.588-.09-5.548-1.893-7.992z" fill="#f06a35"/></svg>
<div style="position:absolute;left:181.00px;top:819.74px;height:35px;line-height:35px;white-space:pre;font-family:'Liberation Sans',sans-serif;font-size:27px;font-weight:400;color:#353535;letter-spacing:0.121px;">TodoListViewModel</div>
<svg style="position:absolute;left:109.0px;top:865.6px;overflow:visible" width="33" height="27.5" viewBox="0 0 33 27.5" ><g transform="rotate(-9 11 11)"><rect x="1.2" y="2.4" width="22" height="18" rx="3.2" fill="none" stroke="#1fabf5" stroke-width="2.2"/></g><rect x="7.4" y="7.2" width="25.6" height="20" rx="3.6" fill="#f6f6f6"/><rect x="8.5" y="8.3" width="23.4" height="17.8" rx="2.8" fill="none" stroke="#1fabf5" stroke-width="2.2"/><circle cx="16.4" cy="14" r="2.5" fill="#1fabf5"/><path d="M9 25.6V22L14.4 18.2L17.6 20.8L23.4 16L31.4 21.6V25.6Z" fill="#1fabf5"/></svg>
<div style="position:absolute;left:153.00px;top:863.74px;height:35px;line-height:35px;white-space:pre;font-family:'Liberation Sans',sans-serif;font-size:27px;font-weight:400;color:#353535;letter-spacing:-0.454px;">Assets</div>
<svg style="position:absolute;left:111px;top:912px;overflow:visible" width="29" height="24" viewBox="0 0 29 24" preserveAspectRatio="none"><path d="M0 3.2Q0 0 3.2 0H9.2Q10.6 0 11.8 1L13.2 2.2Q14.2 3 15.6 3H25.8Q29 3 29 6.2V7.6H0Z" fill="#868a8e"/><path d="M0 10H29V20.8Q29 24 25.8 24H3.2Q0 24 0 20.8Z" fill="#868a8e"/></svg>
<svg style="position:absolute;left:89px;top:919.4px;overflow:visible" width="10.2" height="16" viewBox="0 0 10.2 16" ><path d="M1.3 1.3L8.7 8.0L1.3 14.7" fill="none" stroke="#6f6f6f" stroke-width="2.6" stroke-linecap="round" stroke-linejoin="round"/></svg>
<div style="position:absolute;left:153.00px;top:907.74px;height:35px;line-height:35px;white-space:pre;font-family:'Liberation Sans',sans-serif;font-size:27px;font-weight:400;color:#353535;letter-spacing:-0.113px;">Preview Content</div>
<div style="position:absolute;left:29.40px;top:975.93px;height:33px;line-height:33px;white-space:pre;font-family:'Liberation Sans',sans-serif;font-size:25.6px;font-weight:700;color:#b3b3b3;letter-spacing:0.371px;">Package Dependencies</div>
<svg style="position:absolute;left:33px;top:1023.6px;overflow:visible" width="10.2" height="16" viewBox="0 0 10.2 16" ><path d="M1.3 1.3L8.7 8.0L1.3 14.7" fill="none" stroke="#6f6f6f" stroke-width="2.6" stroke-linecap="round" stroke-linejoin="round"/></svg>
<svg style="position:absolute;left:56.8px;top:1018px;overflow:visible" width="26.5" height="28" viewBox="0 0 26.5 28" preserveAspectRatio="none"><path d="M13.25 0.2L25.6 6.4L19.6 9.4L7.2 3.2Z" fill="#aa7839"/><path d="M5.2 4.2L17.6 10.4L13.25 12.6L0.9 6.4Z" fill="#aa7839"/><path d="M0 8.2L12.3 14.4V28L1.2 22.4Q0 21.8 0 20.4Z" fill="#aa7839"/><path d="M26.5 8.2L14.2 14.4V28L25.3 22.4Q26.5 21.8 26.5 20.4Z" fill="#aa7839"/></svg>
<div style="position:absolute;left:97.00px;top:1015.74px;height:35px;line-height:35px;white-space:pre;font-family:'Liberation Sans',sans-serif;font-size:27px;font-weight:400;color:#353535;letter-spacing:-0.321px;">KeychainAccess</div>
<div style="position:absolute;left:301.00px;top:1015.74px;height:35px;line-height:35px;white-space:pre;font-family:'Liberation Sans',sans-serif;font-size:27px;font-weight:400;color:#808080;letter-spacing:-0.510px;">4.2.2</div>
<svg style="position:absolute;left:33px;top:1067.6px;overflow:visible" width="10.2" height="16" viewBox="0 0 10.2 16" ><path d="M1.3 1.3L8.7 8.0L1.3 14.7" fill="none" stroke="#6f6f6f" stroke-width="2.6" stroke-linecap="round" stroke-linejoin="round"/></svg>
<svg style="position:absolute;left:56.8px;top:1062px;overflow:visible" width="26.5" height="28" viewBox="0 0 26.5 28" preserveAspectRatio="none"><path d="M13.25 0.2L25.6 6.4L19.6 9.4L7.2 3.2Z" fill="#aa7839"/><path d="M5.2 4.2L17.6 10.4L13.25 12.6L0.9 6.4Z" fill="#aa7839"/><path d="M0 8.2L12.3 14.4V28L1.2 22.4Q0 21.8 0 20.4Z" fill="#aa7839"/><path d="M26.5 8.2L14.2 14.4V28L25.3 22.4Q26.5 21.8 26.5 20.4Z" fill="#aa7839"/></svg>
<div style="position:absolute;left:97.00px;top:1059.74px;height:35px;line-height:35px;white-space:pre;font-family:'Liberation Sans',sans-serif;font-size:27px;font-weight:400;color:#353535;letter-spacing:-0.488px;">Supabase</div>
<div style="position:absolute;left:225.10px;top:1059.74px;height:35px;line-height:35px;white-space:pre;font-family:'Liberation Sans',sans-serif;font-size:27px;font-weight:400;color:#808080;letter-spacing:-1.495px;">2.10.1</div>
<svg style="position:absolute;left:33px;top:1111.6px;overflow:visible" width="10.2" height="16" viewBox="0 0 10.2 16" ><path d="M1.3 1.3L8.7 8.0L1.3 14.7" fill="none" stroke="#6f6f6f" stroke-width="2.6" stroke-linecap="round" stroke-linejoin="round"/></svg>
<svg style="position:absolute;left:56.8px;top:1106px;overflow:visible" width="26.5" height="28" viewBox="0 0 26.5 28" preserveAspectRatio="none"><path d="M13.25 0.2L25.6 6.4L19.6 9.4L7.2 3.2Z" fill="#aa7839"/><path d="M5.2 4.2L17.6 10.4L13.25 12.6L0.9 6.4Z" fill="#aa7839"/><path d="M0 8.2L12.3 14.4V28L1.2 22.4Q0 21.8 0 20.4Z" fill="#aa7839"/><path d="M26.5 8.2L14.2 14.4V28L25.3 22.4Q26.5 21.8 26.5 20.4Z" fill="#aa7839"/></svg>
<div style="position:absolute;left:97.00px;top:1103.74px;height:35px;line-height:35px;white-space:pre;font-family:'Liberation Sans',sans-serif;font-size:27px;font-weight:400;color:#353535;letter-spacing:0.526px;">swift-concurrency-extras</div>
<div style="position:absolute;left:412.60px;top:1103.74px;height:35px;line-height:35px;white-space:pre;font-family:'Liberation Sans',sans-serif;font-size:27px;font-weight:400;color:#808080;letter-spacing:-2.010px;">1.1.0</div>
<svg style="position:absolute;left:33px;top:1155.6px;overflow:visible" width="10.2" height="16" viewBox="0 0 10.2 16" ><path d="M1.3 1.3L8.7 8.0L1.3 14.7" fill="none" stroke="#6f6f6f" stroke-width="2.6" stroke-linecap="round" stroke-linejoin="round"/></svg>
<svg style="position:absolute;left:56.8px;top:1150px;overflow:visible" width="26.5" height="28" viewBox="0 0 26.5 28" preserveAspectRatio="none"><path d="M13.25 0.2L25.6 6.4L19.6 9.4L7.2 3.2Z" fill="#aa7839"/><path d="M5.2 4.2L17.6 10.4L13.25 12.6L0.9 6.4Z" fill="#aa7839"/><path d="M0 8.2L12.3 14.4V28L1.2 22.4Q0 21.8 0 20.4Z" fill="#aa7839"/><path d="M26.5 8.2L14.2 14.4V28L25.3 22.4Q26.5 21.8 26.5 20.4Z" fill="#aa7839"/></svg>
<div style="position:absolute;left:97.00px;top:1147.74px;height:35px;line-height:35px;white-space:pre;font-family:'Liberation Sans',sans-serif;font-size:27px;font-weight:400;color:#353535;letter-spacing:0.824px;">swift-crypto</div>
<div style="position:absolute;left:253.80px;top:1147.74px;height:35px;line-height:35px;white-space:pre;font-family:'Liberation Sans',sans-serif;font-size:27px;font-weight:400;color:#808080;letter-spacing:-0.450px;">3.4.0</div>
<div style="position:absolute;left:546px;top:377px;width:2449px;height:44px;background:#edf4ff;"></div>
<div style="position:absolute;left:560px;top:949px;width:10px;height:883px;background:#b3cafc;border-left:2px solid #2f6df6;border-right:2px solid #2f6df6;box-sizing:border-box;border-radius:5px 5px 0 0;border-top:2px solid #2f6df6;"></div>
<div style="position:absolute;left:652px;top:234px;width:14px;height:1598px;background:#e8e8e8;"></div>
<div style="position:absolute;left:652px;top:291px;width:14px;height:1360.0px;background:#d3d3d3;border-radius:7px 7px 7px 7px;box-shadow:0 0 0 1.8px rgba(255,255,255,.6);"></div>
<div style="position:absolute;left:652px;top:335px;width:14px;height:1184.0px;background:#c1c1c1;border-radius:7px 7px 7px 7px;box-shadow:0 0 0 1.8px rgba(255,255,255,.6);"></div>
<div style="position:absolute;left:652px;top:467px;width:14px;height:480.0px;background:#afafaf;border-radius:7px 7px 7px 7px;box-shadow:0 0 0 1.8px rgba(255,255,255,.6);"></div>
<div style="position:absolute;left:652px;top:511px;width:14px;height:392.0px;background:#a1a1a1;border-radius:7px 7px 7px 7px;box-shadow:0 0 0 1.8px rgba(255,255,255,.6);"></div>
<div style="position:absolute;left:652px;top:555px;width:14px;height:260.0px;background:#919191;border-radius:7px 7px 7px 7px;box-shadow:0 0 0 1.8px rgba(255,255,255,.6);"></div>
<div style="position:absolute;left:652px;top:995px;width:14px;height:348.0px;background:#afafaf;border-radius:7px 7px 7px 7px;box-shadow:0 0 0 1.8px rgba(255,255,255,.6);"></div>
<div style="position:absolute;left:652px;top:1083px;width:14px;height:216.0px;background:#a1a1a1;border-radius:7px 7px 7px 7px;box-shadow:0 0 0 1.8px rgba(255,255,255,.6);"></div>
<div style="position:absolute;left:652px;top:1127px;width:14px;height:84.0px;background:#919191;border-radius:7px 7px 7px 7px;box-shadow:0 0 0 1.8px rgba(255,255,255,.6);"></div>
<div style="position:absolute;left:652px;top:1787px;width:14px;height:45px;background:#d3d3d3;border-radius:7px 7px 0px 0px;box-shadow:0 0 0 1.8px rgba(255,255,255,.6);"></div>
<div style="position:absolute;left:652px;top:662px;width:14px;height:2px;background:#e4e4e4;"></div>
<div style="position:absolute;left:652px;top:377px;width:14px;height:44px;background:#7d7f84;"></div>
<svg style="position:absolute;left:655px;top:392.4px" width="8" height="13" viewBox="0 0 8 13"><path d="M1.6 1.6L6.2 6.5L1.6 11.4" fill="none" stroke="#f4f4f4" stroke-width="2.2" stroke-linecap="round" stroke-linejoin="round"/></svg>
<div style="position:absolute;left:543.4px;top:245px;width:100px;height:44px;line-height:46.6px;text-align:right;font-family:'Liberation Sans',sans-serif;font-size:31.5px;color:#a6a6a6;transform:scaleX(.887);transform-origin:100% 50%;">30</div>
<div style="position:absolute;left:769.86px;top:249.22px;height:44px;line-height:44px;white-space:pre;font-family:'Liberation Mono',monospace;font-size:32.94px;color:#1f1f1f;-webkit-text-stroke-width:.35px;"><span style="color:#6c7986;">// </span><span style="color:#58626f;font-weight:700;-webkit-text-stroke-width:0;">MARK: Computed properties</span></div>
<div style="position:absolute;left:543.4px;top:289px;width:100px;height:44px;line-height:46.6px;text-align:right;font-family:'Liberation Sans',sans-serif;font-size:31.5px;color:#a6a6a6;transform:scaleX(.887);transform-origin:100% 50%;">31</div>
<div style="position:absolute;left:769.86px;top:293.22px;height:44px;line-height:44px;white-space:pre;font-family:'Liberation Mono',monospace;font-size:32.94px;color:#1f1f1f;-webkit-text-stroke-width:.35px;"><span style="color:#9e3e9d;font-weight:700;-webkit-text-stroke-width:0;">var</span><span style="color:#1f1f1f;"> </span><span style="color:#3078ad;">body</span><span style="color:#1f1f1f;">: </span><span style="color:#9e3e9d;font-weight:700;-webkit-text-stroke-width:0;">some</span><span style="color:#1f1f1f;"> </span><span style="color:#3d1da8;">View</span><span style="color:#1f1f1f;"> {</span></div>
<div style="position:absolute;left:543.4px;top:333px;width:100px;height:44px;line-height:46.6px;text-align:right;font-family:'Liberation Sans',sans-serif;font-size:31.5px;color:#a6a6a6;transform:scaleX(.887);transform-origin:100% 50%;">32</div>
<div style="position:absolute;left:848.93px;top:337.22px;height:44px;line-height:44px;white-space:pre;font-family:'Liberation Mono',monospace;font-size:32.94px;color:#1f1f1f;-webkit-text-stroke-width:.35px;"><span style="color:#3d1da8;">NavigationView</span><span style="color:#1f1f1f;"> {</span></div>
<div style="position:absolute;left:543.4px;top:377px;width:100px;height:44px;line-height:46.6px;text-align:right;font-family:'Liberation Sans',sans-serif;font-size:31.5px;color:#1a1a1a;transform:scaleX(.887);transform-origin:100% 50%;">33</div>
<div style="position:absolute;left:927.99px;top:381.22px;height:44px;line-height:44px;white-space:pre;font-family:'Liberation Mono',monospace;font-size:32.94px;color:#1f1f1f;-webkit-text-stroke-width:.35px;"><span style="color:#3d1da8;">VStack</span><span style="color:#1f1f1f;"> {</span><span style="display:inline-block;vertical-align:top;position:relative;top:-2.02px;width:62px;height:39.6px;margin:0 3.5px 0 3.4px;border-radius:8px;background:#c9cdd3;"><i style="position:absolute;left:8.7px;top:15px;width:10px;height:10px;border-radius:50%;background:#6e7176;"></i><i style="position:absolute;left:26.1px;top:15px;width:10px;height:10px;border-radius:50%;background:#6e7176;"></i><i style="position:absolute;left:43.1px;top:15px;width:10px;height:10px;border-radius:50%;background:#6e7176;"></i></span><span style="color:#1f1f1f;">}</span></div>
<div style="position:absolute;left:543.4px;top:421px;width:100px;height:44px;line-height:46.6px;text-align:right;font-family:'Liberation Sans',sans-serif;font-size:31.5px;color:#a6a6a6;transform:scaleX(.887);transform-origin:100% 50%;">49</div>
<div style="position:absolute;left:927.99px;top:425.22px;height:44px;line-height:44px;white-space:pre;font-family:'Liberation Mono',monospace;font-size:32.94px;color:#1f1f1f;-webkit-text-stroke-width:.35px;"><span style="color:#1f1f1f;">.</span><span style="color:#7a4eb6;">padding</span><span style="color:#1f1f1f;">(</span><span style="color:#2a27d5;">20</span><span style="color:#1f1f1f;">)</span></div>
<div style="position:absolute;left:543.4px;top:465px;width:100px;height:44px;line-height:46.6px;text-align:right;font-family:'Liberation Sans',sans-serif;font-size:31.5px;color:#a6a6a6;transform:scaleX(.887);transform-origin:100% 50%;">50</div>
<div style="position:absolute;left:927.99px;top:469.22px;height:44px;line-height:44px;white-space:pre;font-family:'Liberation Mono',monospace;font-size:32.94px;color:#1f1f1f;-webkit-text-stroke-width:.35px;"><span style="color:#1f1f1f;">.</span><span style="color:#7a4eb6;">toolbar</span><span style="color:#1f1f1f;"> {</span></div>
<div style="position:absolute;left:543.4px;top:509px;width:100px;height:44px;line-height:46.6px;text-align:right;font-family:'Liberation Sans',sans-serif;font-size:31.5px;color:#a6a6a6;transform:scaleX(.887);transform-origin:100% 50%;">51</div>
<div style="position:absolute;left:1007.06px;top:513.22px;height:44px;line-height:44px;white-space:pre;font-family:'Liberation Mono',monospace;font-size:32.94px;color:#1f1f1f;-webkit-text-stroke-width:.35px;"><span style="color:#3d1da8;">ToolbarItem</span><span style="color:#1f1f1f;">(</span><span style="color:#7a4eb6;">placement</span><span style="color:#1f1f1f;">: .</span><span style="color:#7a4eb6;">automatic</span><span style="color:#1f1f1f;">) {</span></div>
<div style="position:absolute;left:543.4px;top:553px;width:100px;height:44px;line-height:46.6px;text-align:right;font-family:'Liberation Sans',sans-serif;font-size:31.5px;color:#a6a6a6;transform:scaleX(.887);transform-origin:100% 50%;">52</div>
<div style="position:absolute;left:1086.12px;top:557.22px;height:44px;line-height:44px;white-space:pre;font-family:'Liberation Mono',monospace;font-size:32.94px;color:#1f1f1f;-webkit-text-stroke-width:.35px;"><span style="color:#3d1da8;">Button</span><span style="color:#1f1f1f;"> {</span></div>
<div style="position:absolute;left:543.4px;top:597px;width:100px;height:44px;line-height:46.6px;text-align:right;font-family:'Liberation Sans',sans-serif;font-size:31.5px;color:#a6a6a6;transform:scaleX(.887);transform-origin:100% 50%;">53</div>
<div style="position:absolute;left:1165.18px;top:601.22px;height:44px;line-height:44px;white-space:pre;font-family:'Liberation Mono',monospace;font-size:32.94px;color:#1f1f1f;-webkit-text-stroke-width:.35px;"><span style="color:#42757e;">showSheet</span><span style="color:#1f1f1f;"> = </span><span style="color:#9e3e9d;font-weight:700;-webkit-text-stroke-width:0;">false</span></div>
<div style="position:absolute;left:543.4px;top:641px;width:100px;height:44px;line-height:46.6px;text-align:right;font-family:'Liberation Sans',sans-serif;font-size:31.5px;color:#a6a6a6;transform:scaleX(.887);transform-origin:100% 50%;">54</div>
<div style="position:absolute;left:1086.12px;top:645.22px;height:44px;line-height:44px;white-space:pre;font-family:'Liberation Mono',monospace;font-size:32.94px;color:#1f1f1f;-webkit-text-stroke-width:.35px;"><span style="color:#1f1f1f;">} </span><span style="color:#7a4eb6;">label</span><span style="color:#1f1f1f;">: {</span></div>
<div style="position:absolute;left:543.4px;top:685px;width:100px;height:44px;line-height:46.6px;text-align:right;font-family:'Liberation Sans',sans-serif;font-size:31.5px;color:#a6a6a6;transform:scaleX(.887);transform-origin:100% 50%;">55</div>
<div style="position:absolute;left:1165.18px;top:689.22px;height:44px;line-height:44px;white-space:pre;font-family:'Liberation Mono',monospace;font-size:32.94px;color:#1f1f1f;-webkit-text-stroke-width:.35px;"><span style="color:#3d1da8;">Text</span><span style="color:#1f1f1f;">(</span><span style="color:#c13421;">&quot;Done&quot;</span><span style="color:#1f1f1f;">)</span></div>
<div style="position:absolute;left:543.4px;top:729px;width:100px;height:44px;line-height:46.6px;text-align:right;font-family:'Liberation Sans',sans-serif;font-size:31.5px;color:#a6a6a6;transform:scaleX(.887);transform-origin:100% 50%;">56</div>
<div style="position:absolute;left:1244.25px;top:733.22px;height:44px;line-height:44px;white-space:pre;font-family:'Liberation Mono',monospace;font-size:32.94px;color:#1f1f1f;-webkit-text-stroke-width:.35px;"><span style="color:#1f1f1f;">.</span><span style="color:#7a4eb6;">bold</span><span style="color:#1f1f1f;">()</span></div>
<div style="position:absolute;left:543.4px;top:773px;width:100px;height:44px;line-height:46.6px;text-align:right;font-family:'Liberation Sans',sans-serif;font-size:31.5px;color:#a6a6a6;transform:scaleX(.887);transform-origin:100% 50%;">57</div>
<div style="position:absolute;left:1086.12px;top:777.22px;height:44px;line-height:44px;white-space:pre;font-family:'Liberation Mono',monospace;font-size:32.94px;color:#1f1f1f;-webkit-text-stroke-width:.35px;"><span style="color:#1f1f1f;">}</span></div>
<div style="position:absolute;left:543.4px;top:817px;width:100px;height:44px;line-height:46.6px;text-align:right;font-family:'Liberation Sans',sans-serif;font-size:31.5px;color:#a6a6a6;transform:scaleX(.887);transform-origin:100% 50%;">58</div>
<div style="position:absolute;left:543.4px;top:861px;width:100px;height:44px;line-height:46.6px;text-align:right;font-family:'Liberation Sans',sans-serif;font-size:31.5px;color:#a6a6a6;transform:scaleX(.887);transform-origin:100% 50%;">59</div>
<div style="position:absolute;left:1007.06px;top:865.22px;height:44px;line-height:44px;white-space:pre;font-family:'Liberation Mono',monospace;font-size:32.94px;color:#1f1f1f;-webkit-text-stroke-width:.35px;"><span style="color:#1f1f1f;">}</span></div>
<div style="position:absolute;left:543.4px;top:905px;width:100px;height:44px;line-height:46.6px;text-align:right;font-family:'Liberation Sans',sans-serif;font-size:31.5px;color:#a6a6a6;transform:scaleX(.887);transform-origin:100% 50%;">60</div>
<div style="position:absolute;left:927.99px;top:909.22px;height:44px;line-height:44px;white-space:pre;font-family:'Liberation Mono',monospace;font-size:32.94px;color:#1f1f1f;-webkit-text-stroke-width:.35px;"><span style="color:#1f1f1f;">}</span></div>
<div style="position:absolute;left:543.4px;top:949px;width:100px;height:44px;line-height:46.6px;text-align:right;font-family:'Liberation Sans',sans-serif;font-size:31.5px;color:#a6a6a6;transform:scaleX(.887);transform-origin:100% 50%;">61</div>
<div style="position:absolute;left:927.99px;top:953.22px;height:44px;line-height:44px;white-space:pre;font-family:'Liberation Mono',monospace;font-size:32.94px;color:#1f1f1f;-webkit-text-stroke-width:.35px;"><span style="color:#6c7986;">// This block of code is invoked whenever the selection from the picker changes</span></div>
<div style="position:absolute;left:543.4px;top:993px;width:100px;height:44px;line-height:46.6px;text-align:right;font-family:'Liberation Sans',sans-serif;font-size:31.5px;color:#a6a6a6;transform:scaleX(.887);transform-origin:100% 50%;">62</div>
<div style="position:absolute;left:927.99px;top:997.22px;height:44px;line-height:44px;white-space:pre;font-family:'Liberation Mono',monospace;font-size:32.94px;color:#1f1f1f;-webkit-text-stroke-width:.35px;"><span style="color:#1f1f1f;">.</span><span style="color:#7a4eb6;">onChange</span><span style="color:#1f1f1f;">(</span><span style="color:#7a4eb6;">of</span><span style="color:#1f1f1f;">: </span><span style="color:#42757e;">selectionResult</span><span style="color:#1f1f1f;">) {</span></div>
<div style="position:absolute;left:543.4px;top:1037px;width:100px;height:44px;line-height:46.6px;text-align:right;font-family:'Liberation Sans',sans-serif;font-size:31.5px;color:#a6a6a6;transform:scaleX(.887);transform-origin:100% 50%;">63</div>
<div style="position:absolute;left:1007.06px;top:1041.22px;height:44px;line-height:44px;white-space:pre;font-family:'Liberation Mono',monospace;font-size:32.94px;color:#1f1f1f;-webkit-text-stroke-width:.35px;"><span style="color:#6c7986;">// When the selection result is not nil...</span></div>
<div style="position:absolute;left:543.4px;top:1081px;width:100px;height:44px;line-height:46.6px;text-align:right;font-family:'Liberation Sans',sans-serif;font-size:31.5px;color:#a6a6a6;transform:scaleX(.887);transform-origin:100% 50%;">64</div>
<div style="position:absolute;left:1007.06px;top:1085.22px;height:44px;line-height:44px;white-space:pre;font-family:'Liberation Mono',monospace;font-size:32.94px;color:#1f1f1f;-webkit-text-stroke-width:.35px;"><span style="color:#9e3e9d;font-weight:700;-webkit-text-stroke-width:0;">if</span><span style="color:#1f1f1f;"> </span><span style="color:#9e3e9d;font-weight:700;-webkit-text-stroke-width:0;">let</span><span style="color:#1f1f1f;"> imageSelection = </span><span style="color:#42757e;">selectionResult</span><span style="color:#1f1f1f;"> {</span></div>
<div style="position:absolute;left:543.4px;top:1125px;width:100px;height:44px;line-height:46.6px;text-align:right;font-family:'Liberation Sans',sans-serif;font-size:31.5px;color:#a6a6a6;transform:scaleX(.887);transform-origin:100% 50%;">65</div>
<div style="position:absolute;left:1086.12px;top:1129.22px;height:44px;line-height:44px;white-space:pre;font-family:'Liberation Mono',monospace;font-size:32.94px;color:#1f1f1f;-webkit-text-stroke-width:.35px;"><span style="color:#6c7986;">// ... transfer the data from the selection result into</span></div>
<div style="position:absolute;left:543.4px;top:1169px;width:100px;height:44px;line-height:46.6px;text-align:right;font-family:'Liberation Sans',sans-serif;font-size:31.5px;color:#a6a6a6;transform:scaleX(.887);transform-origin:100% 50%;">66</div>
<div style="position:absolute;left:1086.12px;top:1173.22px;height:44px;line-height:44px;white-space:pre;font-family:'Liberation Mono',monospace;font-size:32.94px;color:#1f1f1f;-webkit-text-stroke-width:.35px;"><span style="color:#6c7986;">// an actual instance of TodoItemImage</span></div>
<div style="position:absolute;left:543.4px;top:1213px;width:100px;height:44px;line-height:46.6px;text-align:right;font-family:'Liberation Sans',sans-serif;font-size:31.5px;color:#a6a6a6;transform:scaleX(.887);transform-origin:100% 50%;">67</div>
<div style="position:absolute;left:1086.12px;top:1217.22px;height:44px;line-height:44px;white-space:pre;font-family:'Liberation Mono',monospace;font-size:32.94px;color:#1f1f1f;-webkit-text-stroke-width:.35px;"><span style="color:#42757e;">loadTransferable</span><span style="color:#1f1f1f;">(</span><span style="color:#42757e;">from</span><span style="color:#1f1f1f;">: imageSelection)</span></div>
<div style="position:absolute;left:543.4px;top:1257px;width:100px;height:44px;line-height:46.6px;text-align:right;font-family:'Liberation Sans',sans-serif;font-size:31.5px;color:#a6a6a6;transform:scaleX(.887);transform-origin:100% 50%;">68</div>
<div style="position:absolute;left:1007.06px;top:1261.22px;height:44px;line-height:44px;white-space:pre;font-family:'Liberation Mono',monospace;font-size:32.94px;color:#1f1f1f;-webkit-text-stroke-width:.35px;"><span style="color:#1f1f1f;">}</span></div>
<div style="position:absolute;left:543.4px;top:1301px;width:100px;height:44px;line-height:46.6px;text-align:right;font-family:'Liberation Sans',sans-serif;font-size:31.5px;color:#a6a6a6;transform:scaleX(.887);transform-origin:100% 50%;">69</div>
<div style="position:absolute;left:927.99px;top:1305.22px;height:44px;line-height:44px;white-space:pre;font-family:'Liberation Mono',monospace;font-size:32.94px;color:#1f1f1f;-webkit-text-stroke-width:.35px;"><span style="color:#1f1f1f;">}</span></div>
<div style="position:absolute;left:543.4px;top:1345px;width:100px;height:44px;line-height:46.6px;text-align:right;font-family:'Liberation Sans',sans-serif;font-size:31.5px;color:#a6a6a6;transform:scaleX(.887);transform-origin:100% 50%;">70</div>
<div style="position:absolute;left:543.4px;top:1389px;width:100px;height:44px;line-height:46.6px;text-align:right;font-family:'Liberation Sans',sans-serif;font-size:31.5px;color:#a6a6a6;transform:scaleX(.887);transform-origin:100% 50%;">71</div>
<div style="position:absolute;left:543.4px;top:1433px;width:100px;height:44px;line-height:46.6px;text-align:right;font-family:'Liberation Sans',sans-serif;font-size:31.5px;color:#a6a6a6;transform:scaleX(.887);transform-origin:100% 50%;">72</div>
<div style="position:absolute;left:543.4px;top:1477px;width:100px;height:44px;line-height:46.6px;text-align:right;font-family:'Liberation Sans',sans-serif;font-size:31.5px;color:#a6a6a6;transform:scaleX(.887);transform-origin:100% 50%;">73</div>
<div style="position:absolute;left:848.93px;top:1481.22px;height:44px;line-height:44px;white-space:pre;font-family:'Liberation Mono',monospace;font-size:32.94px;color:#1f1f1f;-webkit-text-stroke-width:.35px;"><span style="color:#1f1f1f;">}</span></div>
<div style="position:absolute;left:543.4px;top:1521px;width:100px;height:44px;line-height:46.6px;text-align:right;font-family:'Liberation Sans',sans-serif;font-size:31.5px;color:#a6a6a6;transform:scaleX(.887);transform-origin:100% 50%;">74</div>
<div style="position:absolute;left:543.4px;top:1565px;width:100px;height:44px;line-height:46.6px;text-align:right;font-family:'Liberation Sans',sans-serif;font-size:31.5px;color:#a6a6a6;transform:scaleX(.887);transform-origin:100% 50%;">75</div>
<div style="position:absolute;left:543.4px;top:1609px;width:100px;height:44px;line-height:46.6px;text-align:right;font-family:'Liberation Sans',sans-serif;font-size:31.5px;color:#a6a6a6;transform:scaleX(.887);transform-origin:100% 50%;">76</div>
<div style="position:absolute;left:769.86px;top:1613.22px;height:44px;line-height:44px;white-space:pre;font-family:'Liberation Mono',monospace;font-size:32.94px;color:#1f1f1f;-webkit-text-stroke-width:.35px;"><span style="color:#1f1f1f;">}</span></div>
<div style="position:absolute;left:543.4px;top:1653px;width:100px;height:44px;line-height:46.6px;text-align:right;font-family:'Liberation Sans',sans-serif;font-size:31.5px;color:#a6a6a6;transform:scaleX(.887);transform-origin:100% 50%;">77</div>
<div style="position:absolute;left:543.4px;top:1697px;width:100px;height:44px;line-height:46.6px;text-align:right;font-family:'Liberation Sans',sans-serif;font-size:31.5px;color:#a6a6a6;transform:scaleX(.887);transform-origin:100% 50%;">78</div>
<div style="position:absolute;left:769.86px;top:1701.22px;height:44px;line-height:44px;white-space:pre;font-family:'Liberation Mono',monospace;font-size:32.94px;color:#1f1f1f;-webkit-text-stroke-width:.35px;"><span style="color:#6c7986;">// </span><span style="color:#58626f;font-weight:700;-webkit-text-stroke-width:0;">MARK: Functions</span></div>
<div style="position:absolute;left:543.4px;top:1741px;width:100px;height:44px;line-height:46.6px;text-align:right;font-family:'Liberation Sans',sans-serif;font-size:31.5px;color:#a6a6a6;transform:scaleX(.887);transform-origin:100% 50%;">79</div>
<div style="position:absolute;left:543.4px;top:1785px;width:100px;height:44px;line-height:46.6px;text-align:right;font-family:'Liberation Sans',sans-serif;font-size:31.5px;color:#a6a6a6;transform:scaleX(.887);transform-origin:100% 50%;">80</div>
<div style="position:absolute;left:769.86px;top:1789.22px;height:44px;line-height:44px;white-space:pre;font-family:'Liberation Mono',monospace;font-size:32.94px;color:#1f1f1f;-webkit-text-stroke-width:.35px;"><span style="color:#6c7986;">// Transfer the data from the PhotosPicker selection result into the stored property that</span></div>
<div style="position:absolute;left:546px;top:190px;width:2449px;height:80px;overflow:hidden;pointer-events:none;"><div style="position:absolute;left:-20px;top:0;width:2489px;height:42px;background:#f3f3f3;box-shadow:0 2px 11px rgba(0,0,0,.15);"></div></div>
<div style="position:absolute;left:546px;top:232px;width:2449px;height:2px;background:#dcdcdc;"></div>
<div style="position:absolute;left:540.9px;top:189px;width:100px;height:44px;line-height:46.6px;text-align:right;font-family:'Liberation Sans',sans-serif;font-size:31.5px;color:#a6a6a6;transform:scaleX(.887);transform-origin:100% 50%;">11</div>
<div style="position:absolute;left:690.80px;top:193.22px;height:44px;line-height:44px;white-space:pre;font-family:'Liberation Mono',monospace;font-size:32.94px;color:#1f1f1f;-webkit-text-stroke-width:.35px;"><span style="color:#9e3e9d;font-weight:700;-webkit-text-stroke-width:0;">struct</span><span style="color:#1f1f1f;"> </span><span style="color:#255e86;">NewItemView</span><span style="color:#1f1f1f;">: </span><span style="color:#3d1da8;">View</span><span style="color:#1f1f1f;"> {</span></div>
<div style="position:absolute;left:2994.5px;top:190px;width:29.5px;height:1642px;background:#fafafa;border-left:1.5px solid #e6e6e6;border-right:2px solid #e8e8e8;box-sizing:border-box;"></div>
<div style="position:absolute;left:3002px;top:618.5px;width:16px;height:649px;background:#7f7f7f;border-radius:8px;"></div>
</div>
</body></html>
